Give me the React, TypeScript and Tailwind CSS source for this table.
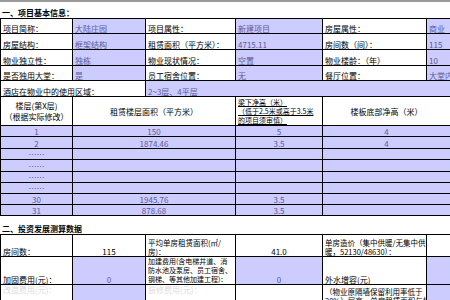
import React from "react";

const P = "bg-[#ccccff]";
const V = "text-[#5a5a9a]";
const td = "border border-black px-[2px] align-bottom overflow-hidden whitespace-nowrap";

function Cols() {
  return (
    <colgroup>
      <col className="w-[72px]" />
      <col className="w-[73px]" />
      <col className="w-[90px]" />
      <col className="w-[87px]" />
      <col className="w-[104px]" />
      <col className="w-[24px]" />
    </colgroup>
  );
}

export default function App() {
  const top = [
    ["项目简称：", "大陆庄园", "项目属性：", "新建项目", "房屋属性：", "商业", "h-[15px]"],
    ["房屋结构：", "框架结构", "租赁面积（平方米）：", "4715.11", "房间数（间）：", "115", "h-[16px]"],
    ["物业独立性：", "独栋", "物业现状情况：", "空置", "物业楼龄：（年）", "10", "h-[16px]"],
    ["是否独用大堂：", "是", "员工宿舍位置：", "无", "餐厅位置：", "大堂内", "h-[15px]"],
  ];
  const data = [
    ["1", "150", "5", "4", "h-[11px]"],
    ["2", "1874.46", "3.5", "4", "h-[12px]"],
    ["……", "", "", "", "h-[11px]"],
    ["……", "", "", "", "h-[12px]"],
    ["……", "", "", "", "h-[11px]"],
    ["……", "", "", "", "h-[11px]"],
    ["30", "1945.76", "3.5", "", "h-[11px]"],
    ["31", "878.68", "3.5", "", "h-[11px]"],
  ];
  return (
    <div
      className="w-[450px] h-[300px] overflow-hidden bg-white text-black text-[8px] leading-[9px]"
      style={{ fontFamily: '"Noto Sans CJK SC", "Noto Sans", sans-serif' }}
    >
      <div className="h-[2px] bg-[#9a9a9a]" />
      <div className="h-[16px] flex items-end px-[2px] pb-[1px] font-semibold">一、项目基本信息：</div>
      <table className="table-fixed border-collapse w-[450px]">
        <Cols />
        <tbody>
          {top.map((r, i) => (
            <tr key={i} className={r[6]}>
              <td className={td}>{r[0]}</td>
              <td className={`${td} ${P} ${V}`}>{r[1]}</td>
              <td className={td}>{r[2]}</td>
              <td className={`${td} ${P} ${V}`}>{r[3]}</td>
              <td className={td}>{r[4]}</td>
              <td className={`${td} ${P} ${V}`}>{r[5]}</td>
            </tr>
          ))}
          <tr className="h-[16px]">
            <td className={td} colSpan={2}>酒店在物业中的使用区域：</td>
            <td className={`${td} ${P} ${V}`} colSpan={4}>2~3层、4平层</td>
          </tr>
          <tr className="h-[29px]">
            <td className={`${td} text-center align-middle leading-[11px]`}>
              <div>楼层(第X层)</div>
              <div>（根据实际修改）</div>
            </td>
            <td className={`${td} text-center align-middle`} colSpan={2}>租赁楼层面积（平方米）</td>
            <td className={`${td} align-middle underline text-[7px] leading-[9px]`}>
              <div>梁下净高（米）</div>
              <div>（低于2.5米或高于3.5米</div>
              <div>的项目须审慎）</div>
            </td>
            <td className={`${td} text-center align-middle`} colSpan={2}>楼板底部净高（米）</td>
          </tr>
          {data.map((r, i) => (
            <tr key={i} className={`${r[4]} ${P} ${V}`}>
              <td className={`${td} text-center`}>{r[0]}</td>
              <td className={`${td} text-center`} colSpan={2}>{r[1]}</td>
              <td className={`${td} text-center`}>{r[2]}</td>
              <td className={`${td} text-center`} colSpan={2}>{r[3]}</td>
            </tr>
          ))}
        </tbody>
      </table>
      <div className="h-[18px] flex items-end px-[2px] pb-[1px] font-semibold">二、投资发展测算数据</div>
      <table className="table-fixed border-collapse w-[450px]">
        <Cols />
        <tbody>
          <tr className="h-[22px]">
            <td className={td}>房间数：</td>
            <td className={`${td} text-center`}>115</td>
            <td className={`${td} text-[7.5px]`}>
              <div>平均单房租赁面积(㎡/</div>
              <div>房)：</div>
            </td>
            <td className={`${td} text-center`}>41.0</td>
            <td className={`${td} text-[7.5px]`}>
              <div>单房造价（集中供暖/无集中供</div>
              <div className="underline">暖，52130/48630）：</div>
            </td>
            <td className={td}></td>
          </tr>
          <tr className="h-[28px]">
            <td className={td}>加固费用(元)：</td>
            <td className={`${td} ${P} ${V} text-center`}>0</td>
            <td className={`${td} text-[7px] leading-[9px]`}>
              <div>加建费用(含电梯井道、消</div>
              <div>防水池及泵房、员工宿舍、</div>
              <div>钢梯、等其他加建工程)：</div>
            </td>
            <td className={`${td} ${P} ${V} text-center`}>0</td>
            <td className={td}>外水增容(元)</td>
            <td className={`${td} ${P}`}></td>
          </tr>
          <tr className="h-[30px]">
            <td className={`${td} align-top text-[#dddddd]`}>改造费用(元)：</td>
            <td className={`${td} ${P}`}></td>
            <td className={`${td} align-top text-[#dddddd]`}>装修费用(元)：</td>
            <td className={td}></td>
            <td className={`${td} align-top text-[7.5px] pt-[2px]`}>
              <div>（物业原隔墙保留利用率低于</div>
              <div>20%）层高、单房租赁面积与标</div>
            </td>
            <td className={`${td} ${P}`}></td>
          </tr>
        </tbody>
      </table>
    </div>
  );
}
